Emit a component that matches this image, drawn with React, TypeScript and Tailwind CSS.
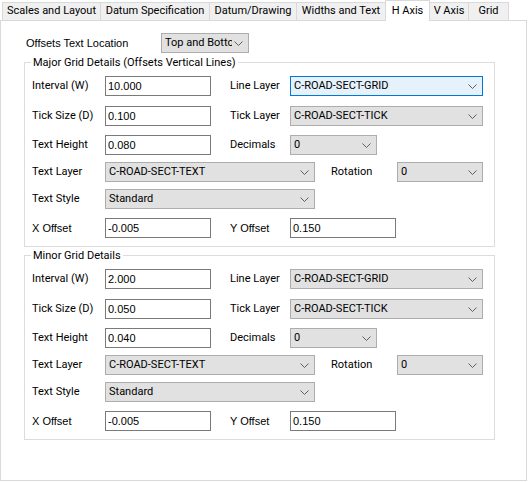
import React from 'react';

const tabs = [
  { label: 'Scales and Layout', w: 'w-[99px]' },
  { label: 'Datum Specification', w: 'w-[110px]' },
  { label: 'Datum/Drawing', w: 'w-[88px]' },
  { label: 'Widths and Text', w: 'w-[90px]' },
  { label: 'H Axis', w: 'w-[45px]', active: true },
  { label: 'V Axis', w: 'w-[40px]' },
  { label: 'Grid', w: 'w-[41px]' },
];

function Chevron() {
  return (
    <svg width="9" height="5" viewBox="0 0 9 5" className="shrink-0">
      <polyline points="0.5,0.5 4.5,4.5 8.5,0.5" fill="none" stroke="#5f5f5f" strokeWidth="1" />
    </svg>
  );
}

function Combo({ value, width, focus }: { value: string; width: string; focus?: boolean }) {
  return (
    <div
      className={`${width} h-[20px] shrink-0 flex items-center gap-[2px] pl-[3px] pr-[5px] border whitespace-nowrap ${
        focus ? 'bg-[#e5f1fb] border-[#0078d7]' : 'bg-[#e1e1e1] border-[#adadad]'
      }`}
    >
      <span className="flex-1 min-w-0 overflow-hidden">{value}</span>
      <Chevron />
    </div>
  );
}

function TextBox({ value, width = 'w-[106px]' }: { value: string; width?: string }) {
  return (
    <div className={`${width} h-[20px] shrink-0 flex items-center pl-[2px] border border-[#7a7a7a] bg-white font-['Liberation_Sans',Arial,sans-serif] text-[11px]`}>
      {value}
    </div>
  );
}

interface GridValues {
  title: string;
  interval: string;
  tick: string;
  height: string;
  xOff: string;
  yOff: string;
  focusLine?: boolean;
}

function GridGroup({ g, className }: { g: GridValues; className: string }) {
  return (
    <fieldset className={`ml-[23px] w-[471px] border border-[#dcdcdc] pb-[8px] ${className}`}>
      <legend className="ml-[6px] px-[2px] leading-[15px]">{g.title}</legend>

      {/* Interval / Line Layer */}
      <div className="flex items-center h-[20px] mt-[6px] pl-[7px]">
        <span className="w-[73px]">Interval (W)</span>
        <TextBox value={g.interval} />
        <span className="ml-[19px] w-[60px]">Line Layer</span>
        <Combo value="C-ROAD-SECT-GRID" width="w-[193px]" focus={g.focusLine} />
      </div>

      {/* Tick Size / Tick Layer */}
      <div className="flex items-center h-[20px] mt-[10px] pl-[7px]">
        <span className="w-[73px]">Tick Size (D)</span>
        <TextBox value={g.tick} />
        <span className="ml-[19px] w-[60px]">Tick Layer</span>
        <Combo value="C-ROAD-SECT-TICK" width="w-[193px]" />
      </div>

      {/* Text Height / Decimals */}
      <div className="flex items-center h-[20px] mt-[9px] pl-[7px]">
        <span className="w-[73px]">Text Height</span>
        <TextBox value={g.height} />
        <span className="ml-[19px] w-[60px]">Decimals</span>
        <Combo value="0" width="w-[87px]" />
      </div>

      {/* Text Layer / Rotation */}
      <div className="flex items-center h-[20px] mt-[7px] pl-[7px]">
        <span className="w-[73px]">Text Layer</span>
        <Combo value="C-ROAD-SECT-TEXT" width="w-[210px]" />
        <span className="ml-[16px] w-[66px]">Rotation</span>
        <Combo value="0" width="w-[86px]" />
      </div>

      {/* Text Style */}
      <div className="flex items-center h-[20px] mt-[7px] pl-[7px]">
        <span className="w-[73px]">Text Style</span>
        <Combo value="Standard" width="w-[210px]" />
      </div>

      {/* Offsets */}
      <div className="flex items-center h-[20px] mt-[9px] pl-[7px]">
        <span className="w-[73px] font-['Liberation_Sans',Arial,sans-serif]">X Offset</span>
        <TextBox value={g.xOff} />
        <span className="ml-[19px] w-[60px] font-['Liberation_Sans',Arial,sans-serif]">Y Offset</span>
        <TextBox value={g.yOff} />
      </div>
    </fieldset>
  );
}

export default function App() {
  const major: GridValues = {
    title: 'Major Grid Details (Offsets Vertical Lines)',
    interval: '10.000',
    tick: '0.100',
    height: '0.080',
    xOff: '-0.005',
    yOff: '0.150',
    focusLine: true,
  };
  const minor: GridValues = {
    title: 'Minor Grid Details',
    interval: '2.000',
    tick: '0.050',
    height: '0.040',
    xOff: '-0.005',
    yOff: '0.150',
  };

  return (
    <div className="w-[529px] h-[482px] bg-white text-black text-[11px] font-['Segoe_UI',Roboto,sans-serif]">
      {/* Tab strip */}
      <div className="relative z-10 flex items-end h-[20px] pl-[2px] whitespace-nowrap">
        {tabs.map((t) =>
          t.active ? (
            <div
              key={t.label}
              className={`${t.w} h-[21px] -mb-px -ml-px shrink-0 flex justify-center pt-[2px] bg-white border border-b-0 border-[#d9d9d9]`}
            >
              {t.label}
            </div>
          ) : (
            <div
              key={t.label}
              className={`${t.w} h-[18px] -ml-px first:ml-0 shrink-0 flex items-center justify-center bg-[#f0f0f0] border border-b-0 border-[#d9d9d9]`}
            >
              {t.label}
            </div>
          )
        )}
      </div>

      {/* Tab page */}
      <div className="w-[527px] h-[461px] border border-[#d9d9d9] bg-white">
        <div className="flex items-center h-[20px] mt-[12px] ml-[25px]">
          <span className="w-[135px] font-['Liberation_Sans',Arial,sans-serif]">Offsets Text Location</span>
          <Combo value="Top and Bottom" width="w-[88px]" />
        </div>

        <GridGroup g={major} className="mt-[2px]" />
        <GridGroup g={minor} className="mt-[1px]" />
      </div>
    </div>
  );
}
